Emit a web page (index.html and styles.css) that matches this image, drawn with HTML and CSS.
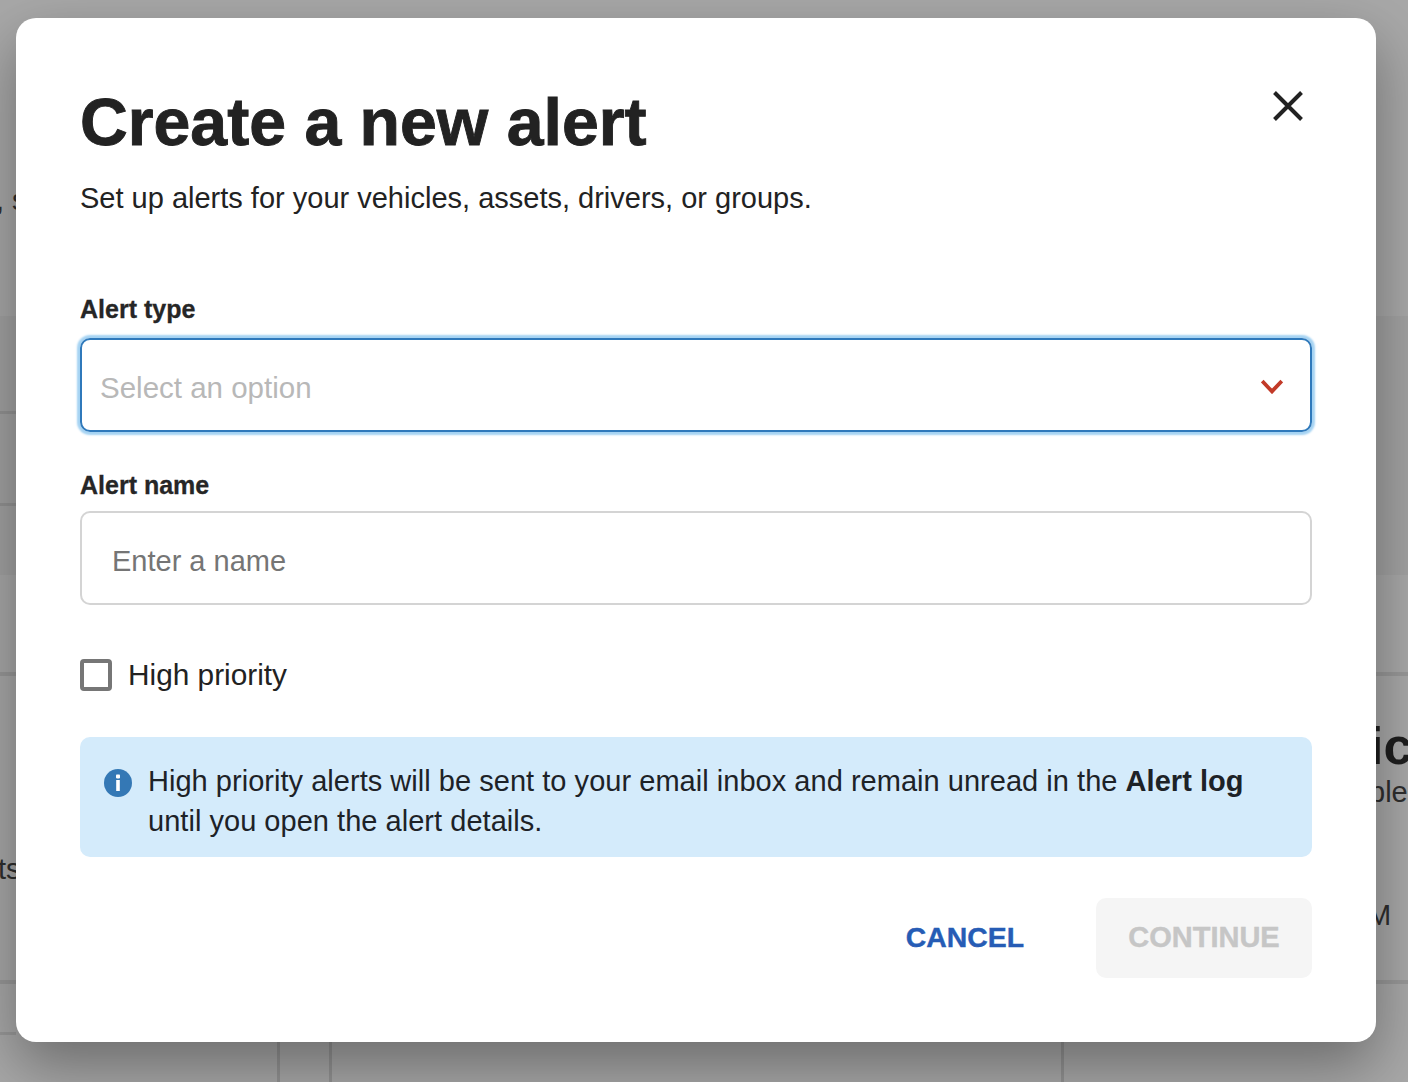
FILE: index.html
```html
<!DOCTYPE html>
<html lang="en">
<head>
<meta charset="utf-8">
<title>Create a new alert</title>
<link rel="stylesheet" href="styles.css">
</head>
<body>
<div class="backdrop">
  <div class="bg-band"></div>
  <div class="bg-line l1"></div>
  <div class="bg-line l2"></div>
  <div class="bg-line l3"></div>
  <div class="bg-line l4"></div>
  <div class="bg-line l5"></div>
  <div class="bg-v v1"></div>
  <div class="bg-v v2"></div>
  <div class="bg-v v3"></div>
  <span class="bg-text t1">, s</span>
  <span class="bg-text t2">ts</span>
  <span class="bg-text t3">ic</span>
  <span class="bg-text t4">ble</span>
  <span class="bg-text t5">M</span>
</div>
<main class="modal">
  <header class="head">
    <div>
      <h1 class="title">Create a new alert</h1>
      <p class="sub">Set up alerts for your vehicles, assets, drivers, or groups.</p>
    </div>
    <svg class="close" viewBox="0 0 30 30" width="30" height="30"><path d="M1.5 1.5 28.500 28.500M28.500 1.500 1.500 28.500" fill="none" stroke="#222" stroke-width="4"/></svg>
  </header>
  <label class="label first">Alert type</label>
  <div class="select">
    <span class="select-text">Select an option</span>
    <svg class="chev" viewBox="0 0 22 15" width="22" height="15"><path d="M1.200 2 11 12.400 20.800 2" fill="none" stroke="#c23a28" stroke-width="3.800"/></svg>
  </div>
  <label class="label second">Alert name</label>
  <div class="input">Enter a name</div>
  <div class="check-row">
    <span class="check"></span>
    <span class="check-text">High priority</span>
  </div>
  <div class="note">
    <svg class="info" viewBox="0 0 28 28" width="28" height="28"><circle cx="14" cy="14" r="14" fill="#3478b5"/><rect x="12" y="5.600" width="4" height="3.800" rx=".8" fill="#fff"/><rect x="12.200" y="11" width="3.600" height="11" fill="#fff"/></svg>
    <p class="note-text">High priority alerts will be sent to your email inbox and remain unread in the <b>Alert log</b> until you open the alert details.</p>
  </div>
  <footer class="actions">
    <button class="btn cancel">CANCEL</button>
    <button class="btn continue">CONTINUE</button>
  </footer>
</main>
</body>
</html>
```
FILE: styles.css
```css
* { box-sizing: border-box; }
html, body { margin: 0; height: 1082px; overflow: hidden; }
body { font-family: "Liberation Sans", Arial, sans-serif; color: #222; background: #a8a8a8; position: relative; }
.backdrop { position: absolute; inset: 0; overflow: hidden; }
.bg-band { position: absolute; left: 0; right: 0; top: 316px; height: 259px; background: rgba(0,0,0,.035); }
.bg-line { position: absolute; height: 3px; background: rgba(0,0,0,.09); }
.l1 { top: 411px; left: 0; width: 16px; }
.l2 { top: 503px; left: 0; width: 16px; }
.l3 { top: 1032px; left: 0; width: 16px; }
.l4 { top: 672px; left: 0; right: 0; height: 4px; }
.l5 { top: 980px; left: 0; right: 0; height: 4px; }
.bg-v { position: absolute; top: 1030px; bottom: 0; width: 3px; background: rgba(0,0,0,.12); }
.v1 { left: 277px; } .v2 { left: 329px; } .v3 { left: 1061px; }
.bg-text { position: absolute; color: #2e2e2e; font-size: 29px; line-height: 32px; }
.t1 { left: -4px; top: 184px; }
.t2 { left: -2px; top: 853px; }
.t3 { left: 1369px; top: 720px; font-size: 52px; line-height: 52px; font-weight: 700; color: #1e1e1e; }
.t4 { left: 1369px; top: 776px; }
.t5 { left: 1367px; top: 899px; }
.modal { position: absolute; left: 16px; top: 18px; width: 1360px; height: 1024px; background: #fff; border-radius: 20px; padding: 64px 64px 0; box-shadow: 0 24px 60px rgba(0,0,0,.36); }
.head { display: flex; justify-content: space-between; align-items: flex-start; }
.title { margin: 0; font-size: 66.200px; line-height: 80px; font-weight: 700; color: #222; -webkit-text-stroke: .9px #222; }
.sub { margin: 20px 0 0; font-size: 29px; line-height: 32px; color: #222; }
.close { margin: 9px 9px 0 0; }
.label { display: block; font-size: 25px; line-height: 32px; font-weight: 700; color: #262626; -webkit-text-stroke: .3px #262626; }
.first { margin-top: 79px; }
.second { margin-top: 37px; }
.select { margin-top: 13px; height: 94px; border: 2px solid #2f79bb; border-radius: 10px; box-shadow: 0 0 2px 3px #a5d3f3; display: flex; align-items: center; justify-content: space-between; padding: 6px 27px 0 18px; }
.select-text { font-size: 29.500px; color: #b8b8b8; }
.chev { margin-top: -4px; }
.input { margin-top: 10px; height: 94px; border: 2px solid #d4d4d4; border-radius: 10px; padding: 6px 30px 0; display: flex; align-items: center; font-size: 29px; color: #757575; }
.check-row { margin-top: 54px; display: flex; align-items: center; gap: 16px; }
.check { width: 32px; height: 32px; border: 4px solid #767676; border-radius: 4px; background: #fff; }
.check-text { font-size: 29.800px; line-height: 32px; color: #222; }
.note { margin-top: 46px; height: 120px; background: #d4ebfb; border-radius: 10px; padding: 24px 40px 0 24px; display: flex; gap: 16px; }
.info { flex: none; margin-top: 8px; }
.note-text { margin: 0; font-size: 29px; line-height: 40px; letter-spacing: .03px; color: #1d2227; }
.note-text b { font-weight: 700; }
.actions { margin-top: 41px; display: flex; justify-content: flex-end; align-items: center; gap: 72px; }
.btn { border: 0; background: none; font: inherit; font-weight: 700; height: 80px; padding: 0 0 2px; border-radius: 10px; }
.cancel { font-size: 28.400px; color: #265cb5; -webkit-text-stroke: .4px #265cb5; }
.continue { font-size: 29px; width: 216px; background: #f5f5f5; color: #c6c6c6; -webkit-text-stroke: .4px #c6c6c6; }
```
